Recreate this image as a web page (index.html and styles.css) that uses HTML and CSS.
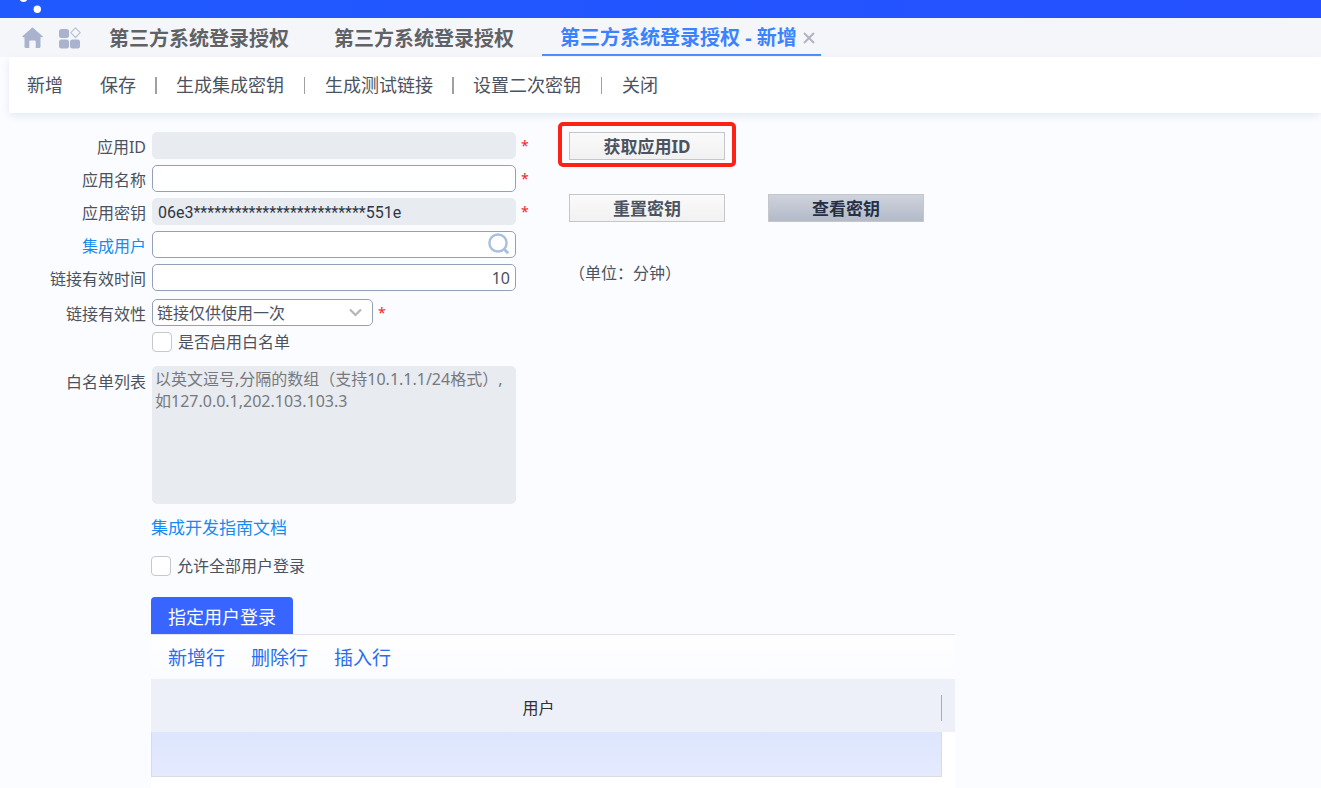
FILE: index.html
```html
<!DOCTYPE html>
<html lang="zh-CN">
<head>
<meta charset="utf-8">
<title>第三方系统登录授权 - 新增</title>
<link rel="stylesheet" href="styles.css">
</head>
<body>
<header class="brand">
  <svg class="brand-mark" width="48" height="18" viewBox="0 0 48 18" fill="#fff" aria-hidden="true"><circle cx="23.5" cy="-2" r="4"/><circle cx="37.3" cy="9.3" r="3.7"/></svg>
</header>
<nav class="tabs" aria-label="页签">
  <button class="icon-button" type="button" aria-label="首页">
    <svg width="22" height="22" viewBox="0 0 22 22" fill="#a9b3cd" aria-hidden="true"><path d="M9.700.9q.8-.7 1.600 0l9.300 8.300q.5.9-.5 1.100H18.500v9.200q0 1.500-1.500 1.500h-3.300v-6.500q0-1-1-1H8.300q-1 0-1 1V21H4Q2.500 21 2.500 19.500v-9.200H.9q-1-.2-.5-1.100z"/></svg>
  </button>
  <button class="icon-button" type="button" aria-label="应用">
    <svg width="22" height="22" viewBox="0 0 22 22" fill="#a9b3cd" aria-hidden="true"><rect x="0" y="2" width="10" height="9" rx="2.500"/><rect x="0" y="12.500" width="10" height="9" rx="2.500"/><rect x="11" y="12.500" width="10" height="9" rx="2.500"/><path d="M16.500.9l4.700 4.800-4.700 4.800-4.700-4.800z" fill="none" stroke="#b9c1d6" stroke-width="1.200" stroke-linejoin="round"/></svg>
  </button>
  <a class="tab" href="#">第三方系统登录授权</a>
  <a class="tab" href="#">第三方系统登录授权</a>
  <div class="tab-active">
    <a class="tab-current" href="#" aria-current="page">第三方系统登录授权 - 新增</a>
    <button class="tab-close" type="button" aria-label="关闭页签"><svg width="12" height="12" viewBox="0 0 12 12" stroke="#b1b5bf" stroke-width="2" aria-hidden="true"><path d="M1 1l10 10M11 1L1 11"/></svg></button>
  </div>
</nav>
<div class="toolbar">
  <button class="tool tool-first" type="button">新增</button>
  <button class="tool" type="button">保存</button>
  <button class="tool tool-divided tool-group" type="button">生成集成密钥</button>
  <button class="tool tool-divided" type="button">生成测试链接</button>
  <button class="tool tool-divided tool-group" type="button">设置二次密钥</button>
  <button class="tool tool-divided" type="button">关闭</button>
</div>
<main class="content">
  <div class="form-area">
    <form class="form">
      <label class="label" for="app-id">应用ID</label>
      <div class="field"><input class="input" id="app-id" type="text" disabled><span class="required">*</span></div>
      <label class="label" for="app-name">应用名称</label>
      <div class="field"><input class="input" id="app-name" type="text"><span class="required">*</span></div>
      <label class="label" for="app-key">应用密钥</label>
      <div class="field"><input class="input input-key" id="app-key" type="text" value="06e3*************************551e" disabled><span class="required">*</span></div>
      <label class="label label-link" for="app-user">集成用户</label>
      <div class="field">
        <div class="search">
          <input class="input" id="app-user" type="text">
          <button class="search-button" type="button" aria-label="查找用户"><svg width="22" height="22" viewBox="0 0 22 22" fill="none" stroke="#abc0df" stroke-width="2.500" aria-hidden="true"><circle cx="10" cy="10" r="8.600"/><path d="M15.500 15.500l4.700 4.700" stroke-width="3"/></svg></button>
        </div>
      </div>
      <label class="label" for="link-time">链接有效时间</label>
      <div class="field"><input class="input input-number" id="link-time" type="text" value="10"></div>
      <label class="label label-select" for="link-mode">链接有效性</label>
      <div class="field field-select">
        <div class="select-box">
          <select class="select" id="link-mode"><option>链接仅供使用一次</option></select>
          <svg class="select-arrow" width="13" height="9" viewBox="0 0 13 9" fill="none" stroke="#b3b5b8" stroke-width="2.200" aria-hidden="true"><path d="M1 1.500l5.500 5.500L12 1.500"/></svg>
        </div>
        <span class="required">*</span>
      </div>
      <label class="check"><input class="checkbox" type="checkbox">是否启用白名单</label>
      <label class="label label-area" for="white-list">白名单列表</label>
      <div class="field field-area"><textarea class="textarea" id="white-list" disabled placeholder="以英文逗号,分隔的数组（支持10.1.1.1/24格式）,如127.0.0.1,202.103.103.3"></textarea></div>
    </form>
    <div class="side">
      <div class="side-row"><button class="button button-marked" type="button">获取应用ID</button></div>
      <div class="side-row">
        <button class="button" type="button">重置密钥</button>
        <button class="button button-dark" type="button">查看密钥</button>
      </div>
      <p class="unit">（单位：分钟）</p>
    </div>
  </div>
  <section class="users">
    <a class="guide" href="#">集成开发指南文档</a>
    <label class="check check-all"><input class="checkbox" type="checkbox">允许全部用户登录</label>
    <div class="panel-tabs"><button class="panel-tab" type="button">指定用户登录</button></div>
    <div class="panel">
      <div class="row-actions">
        <button class="row-action" type="button">新增行</button>
        <button class="row-action" type="button">删除行</button>
        <button class="row-action" type="button">插入行</button>
      </div>
      <table class="table">
        <thead><tr><th class="head-user" scope="col">用户</th><td class="head-end"></td></tr></thead>
        <tbody><tr><td class="cell-user"></td><td class="cell-end"></td></tr></tbody>
      </table>
    </div>
  </section>
</main>
</body>
</html>
```

FILE: styles.css
```css
* { box-sizing: border-box; }

body {
  display: flex;
  flex-direction: column;
  min-height: 100vh;
  margin: 0;
  background: #fbfcff;
  color: #4b5260;
  font: 16px/22px "Noto Sans", "Noto Sans CJK SC", sans-serif;
}

button, input, select, textarea { font: inherit; color: inherit; }
button { margin: 0; padding: 0; border: 0; background: none; cursor: pointer; }
a { text-decoration: none; }
svg { display: block; }

.brand { height: 18px; background: linear-gradient(90deg, #205aff, #2550ff); }
.brand-mark { overflow: hidden; }

.tabs {
  display: flex;
  align-items: center;
  height: 39px;
  padding-left: 22px;
  background: #f5f6fa;
  font-size: 20px;
  font-weight: 700;
  white-space: nowrap;
}
.icon-button { margin-right: 15px; }
.tab { margin: 0 31px 0 13px; padding-top: 2px; color: #606266; }
.tab + .tab { margin: 0 28px 0 14px; }
.tab-active {
  display: flex;
  align-items: center;
  align-self: flex-start;
  gap: 6px;
  height: 38px;
  padding: 4px 6px 0 18px;
  border-bottom: 2px solid #3b82fe;
}
.tab-current { color: #3b82fe; }

.toolbar {
  display: flex;
  align-items: center;
  height: 56px;
  margin-left: 9px;
  padding-left: 18px;
  background: #fff;
  box-shadow: 0 3px 8px #e3ebf4;
  font-size: 18px;
  white-space: nowrap;
}
.tool { display: flex; align-items: center; }
.tool-first { margin-right: 37px; }
.tool-divided::before {
  width: 1px;
  height: 17px;
  margin: 0 20px;
  background: #a0a0a0;
  content: "";
}
.tool-group::before { width: 2px; margin: 0 19px; }

.content { display: flex; flex: 1; flex-direction: column; padding-top: 19px; }
.form-area { display: flex; align-items: flex-start; }
.form {
  display: grid;
  grid-template-columns: 146px 378px;
  gap: 6px;
}
.label { padding-top: 4px; text-align: right; }
.label-link { color: #168bef; }
.label-select { padding-top: 6px; }
.label-area { padding-top: 13px; }
.field { display: flex; align-items: center; gap: 5px; }
.field-select { padding-top: 2px; }
.field-area { padding-top: 8px; }
.required { color: #f5222d; font-size: 14px; line-height: 20px; }

.input, .select {
  height: 27px;
  padding: 0 5px;
  border: 1px solid #949fb8;
  border-radius: 5px;
  background: #fff;
}
.input { width: 364px; }
.input-key { padding-top: 2px; font-family: Roboto, sans-serif; }
.input:disabled, .textarea:disabled {
  border-color: #e8ebf0;
  background: #e8ebf0;
  color: #303744;
}
.input-number { text-align: right; }
.search, .select-box { position: relative; }
.search { height: 27px; }
.search-button { position: absolute; top: 2px; right: 6px; }
.select-box { height: 27px; }
.select { width: 221px; padding: 0 4px; appearance: none; }
.select-arrow { position: absolute; top: 9px; right: 11px; pointer-events: none; }

.check {
  display: flex;
  grid-column: 2;
  align-items: center;
  gap: 6px;
  line-height: 20px;
}
.checkbox {
  width: 20px;
  height: 20px;
  margin: 0;
  border: 1px solid #c6c8cc;
  border-radius: 4px;
  background: #fff;
  appearance: none;
}
.textarea {
  width: 364px;
  height: 138px;
  padding: 1px 2px;
  border: 1px solid;
  border-radius: 5px;
  resize: none;
}
.textarea::placeholder { color: #77797d; }

.side { display: flex; flex-direction: column; gap: 34px; margin-left: 39px; }
.side-row { display: flex; gap: 43px; }
.button {
  position: relative;
  width: 156px;
  height: 28px;
  padding-top: 2px;
  border: 1px solid #c5c6c9;
  background: linear-gradient(#fafafa, #f1f1f1);
  font-size: 17px;
  font-weight: 700;
}
.button-dark { background: linear-gradient(#ced2dc, #b3bac8); color: #252f45; }
.button-marked::after {
  position: absolute;
  inset: -11px -12px -8px;
  border: 4px solid #fe2115;
  border-radius: 5px;
  content: "";
}
.unit { margin: 5px 0 0; font-family: "Noto Sans CJK SC", sans-serif; }

.users {
  display: flex;
  flex: 1;
  flex-direction: column;
  align-items: flex-start;
  width: 100%;
  max-width: 955px;
  padding: 13px 0 0 151px;
}
.guide { color: #168bef; font-size: 17px; }
.check-all { margin-top: 17px; }
.panel-tabs { width: 100%; margin-top: 21px; border-bottom: 1px solid #e0e3ea; }
.panel-tab {
  display: block;
  height: 37px;
  padding: 2px 17px 0;
  border-radius: 4px 4px 0 0;
  background: #3864ff;
  color: #fff;
  font-size: 18px;
}
.panel { flex: 1; width: 100%; background: #fff; }
.row-actions {
  display: flex;
  align-items: center;
  gap: 26px;
  height: 44px;
  padding: 2px 0 0 17px;
  background: linear-gradient(#fefeff, #fbfcff);
  color: #286df0;
  font-size: 19px;
}
.table { width: 100%; table-layout: fixed; border-spacing: 0; }
.table th, .table td { padding: 0; }
.table .head-user, .head-end { height: 53px; background: #edf0f9; }
.table .head-user {
  padding: 4px 16px 0 0;
  background: linear-gradient(#a9acb7, #a9acb7) right 16px / 1px 26px no-repeat #edf0f9;
  color: #303133;
  font-weight: 400;
}
.head-end { width: 13px; }
.cell-user {
  height: 45px;
  border: solid #dadce3;
  border-width: 0 1px 1px;
  background: linear-gradient(#dde6fd, #e5eaff);
}
```
